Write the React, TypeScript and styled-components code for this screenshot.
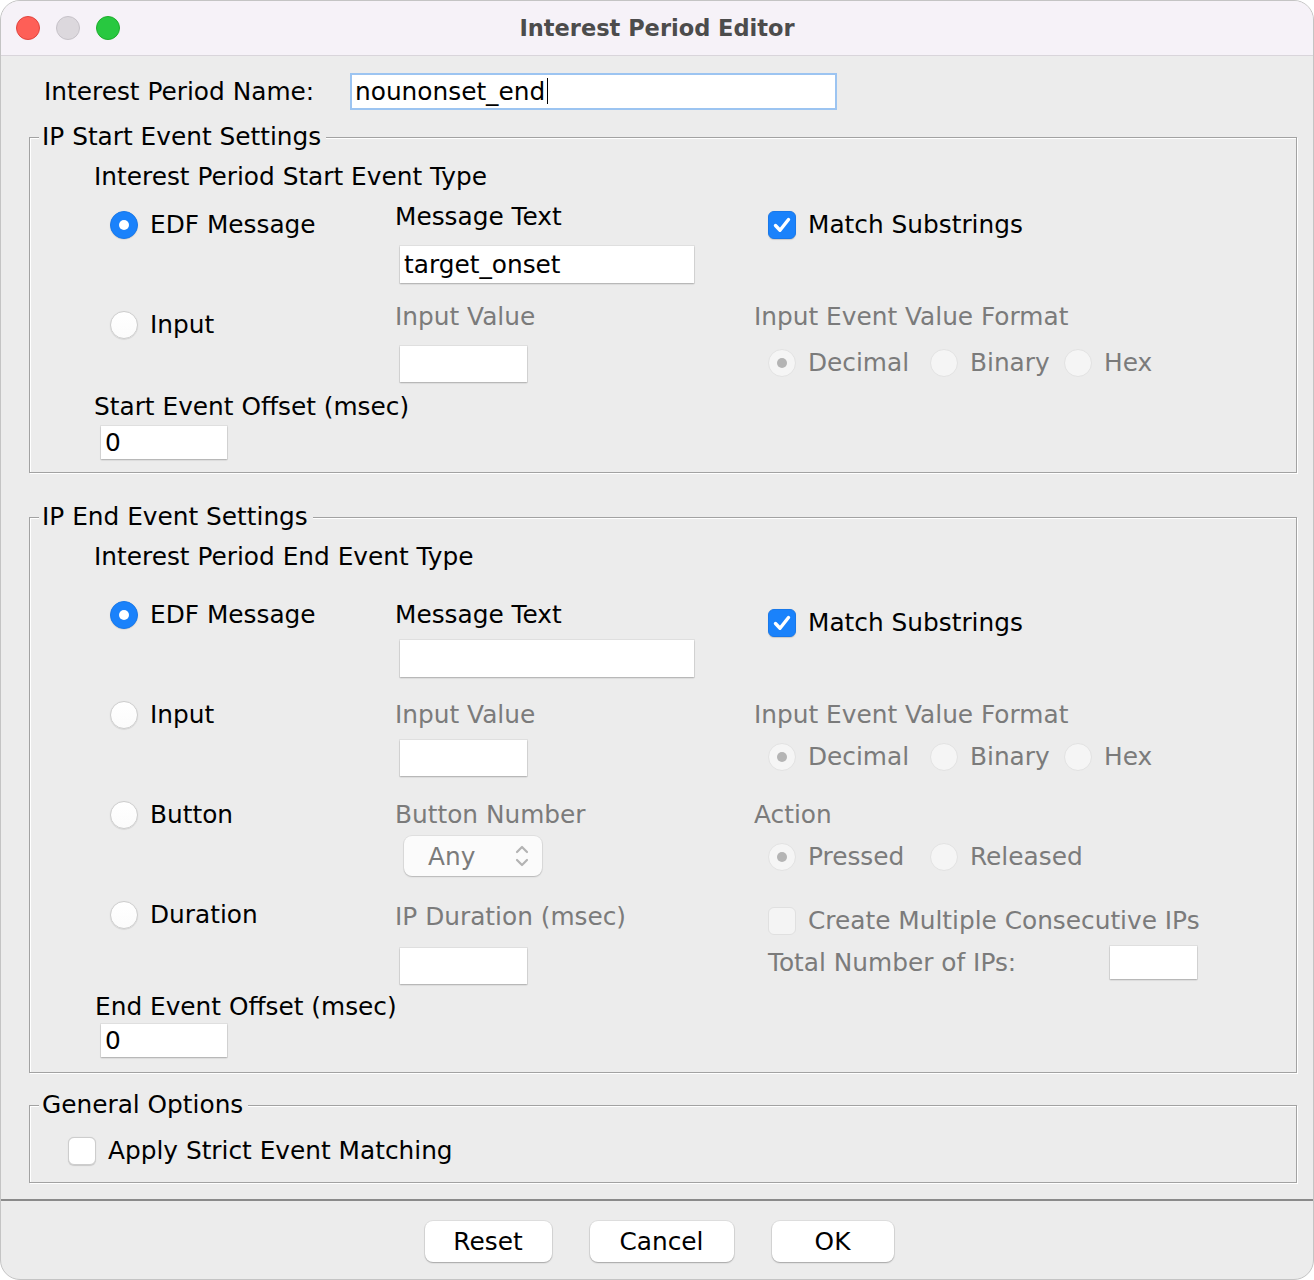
import React from "react";
import styled, { createGlobalStyle } from "styled-components";

const GlobalStyle = createGlobalStyle`
  html, body {
    margin: 0;
    padding: 0;
    background: #ffffff;
  }
`;

const Window = styled.div`
  width: 1314px;
  height: 1280px;
  box-sizing: border-box;
  border: 1px solid #c4c4c4;
  border-radius: 20px;
  overflow: hidden;
  background: #ececec;
  display: flex;
  flex-direction: column;
  font-family: "DejaVu Sans", "Liberation Sans", sans-serif;
  font-size: 24.8px;
  color: #000000;
`;

const TitleBar = styled.div`
  flex: none;
  height: 55px;
  box-sizing: border-box;
  border-bottom: 1px solid #d9d5db;
  background: #f6f2f8;
  display: grid;
  grid-template-columns: 1fr auto 1fr;
  align-items: center;
`;

const Lights = styled.div`
  display: flex;
  gap: 16px;
  padding-left: 15px;
`;

const Light = styled.span<{ $fill: string; $edge: string }>`
  width: 24px;
  height: 24px;
  box-sizing: border-box;
  border-radius: 50%;
  background: ${(p) => p.$fill};
  border: 1px solid ${(p) => p.$edge};
`;

const Title = styled.div`
  font-weight: bold;
  font-size: 22.5px;
  color: #4c4c4c;
`;

const Body = styled.div`
  flex: none;
  display: flex;
  flex-direction: column;
  padding: 17px 16px 16px 28px;
`;

const NameRow = styled.div`
  display: grid;
  grid-template-columns: 306px 487px;
  align-items: center;
  padding-left: 15px;
  height: 37px;
`;

const Text = styled.span<{ $muted?: boolean }>`
  line-height: 30px;
  white-space: nowrap;
  color: ${(p) => (p.$muted ? "#7b7b7b" : "#000000")};
`;

const Field = styled.div<{ $w: number; $h: number; $ml?: number; $mt?: number; $focus?: boolean }>`
  width: ${(p) => p.$w}px;
  height: ${(p) => p.$h}px;
  margin-left: ${(p) => p.$ml ?? 0}px;
  margin-top: ${(p) => p.$mt ?? 0}px;
  box-sizing: border-box;
  background: #ffffff;
  display: flex;
  align-items: center;
  padding-left: ${(p) => (p.$focus ? 3 : 4)}px;
  border: ${(p) => (p.$focus ? "2px solid #9cc4f1" : "none")};
  box-shadow: ${(p) =>
    p.$focus
      ? "none"
      : "0 0 0 1px rgba(0, 0, 0, 0.05), 0 1px 1.5px rgba(0, 0, 0, 0.24)"};
  white-space: nowrap;
`;

const Caret = styled.span`
  display: inline-block;
  width: 1px;
  height: 26px;
  margin: 0 0 2px 2px;
  background: #000000;
`;

const GroupBox = styled.div<{ $mt: number; $pb: number }>`
  margin-top: ${(p) => p.$mt}px;
  border: 1px solid #a2a2a2;
  box-shadow: inset 1px 1px 0 #ffffff, 1px 1px 0 #ffffff;
  display: flex;
  flex-direction: column;
  align-items: flex-start;
  padding-bottom: ${(p) => p.$pb}px;
`;

const GroupTitle = styled.div`
  margin: -16px 0 0 9px;
  padding: 0 5px 0 3px;
  background: #ececec;
  line-height: 30px;
  white-space: nowrap;
`;

const Indented = styled.div<{ $ml: number; $mt?: number }>`
  margin-left: ${(p) => p.$ml}px;
  margin-top: ${(p) => p.$mt ?? 0}px;
  display: flex;
  flex-direction: column;
  align-items: flex-start;
`;

const EventRow = styled.div<{ $h: number; $mt?: number }>`
  align-self: stretch;
  height: ${(p) => p.$h}px;
  margin-top: ${(p) => p.$mt ?? 0}px;
  padding-left: 80px;
  display: grid;
  grid-template-columns: 285px 359px 1fr;
  align-items: start;
`;

const Column = styled.div`
  display: flex;
  flex-direction: column;
  align-items: flex-start;
`;

const OptionLine = styled.div<{ $mt?: number; $ml?: number }>`
  display: flex;
  align-items: center;
  gap: 12px;
  height: 30px;
  margin-top: ${(p) => p.$mt ?? 0}px;
  margin-left: ${(p) => p.$ml ?? 0}px;
`;

const RadioDot = styled.span<{ $checked?: boolean; $disabled?: boolean }>`
  flex: none;
  width: 28px;
  height: 28px;
  box-sizing: border-box;
  border-radius: 50%;
  display: flex;
  align-items: center;
  justify-content: center;
  background: ${(p) =>
    p.$checked && !p.$disabled
      ? "#1a82fb"
      : p.$disabled
      ? "#f5f5f5"
      : "linear-gradient(#ffffff, #fbfbfb)"};
  border: 1px solid
    ${(p) => (p.$checked && !p.$disabled ? "#1878ea" : p.$disabled ? "#e2e2e2" : "#cdcdcd")};
  box-shadow: ${(p) => (p.$disabled ? "none" : "0 0.5px 1px rgba(0, 0, 0, 0.15)")};

  &::after {
    content: "";
    display: ${(p) => (p.$checked ? "block" : "none")};
    width: 10px;
    height: 10px;
    border-radius: 50%;
    background: ${(p) => (p.$disabled ? "#b4b4b4" : "#ffffff")};
  }
`;

const CheckBox = styled.span<{ $checked?: boolean; $disabled?: boolean }>`
  flex: none;
  width: 28px;
  height: 28px;
  box-sizing: border-box;
  border-radius: 6px;
  display: flex;
  align-items: center;
  justify-content: center;
  background: ${(p) => (p.$checked ? "#1a82fb" : p.$disabled ? "#f4f4f4" : "#ffffff")};
  border: 1px solid ${(p) => (p.$checked ? "#1878ea" : p.$disabled ? "#e0e0e0" : "#cdcdcd")};
  box-shadow: ${(p) => (p.$disabled ? "none" : "0 0.5px 1px rgba(0, 0, 0, 0.15)")};
`;

const RadioGroup = styled.div<{ $mt: number }>`
  display: grid;
  grid-template-columns: 162px 134px auto;
  margin-left: 14px;
  margin-top: ${(p) => p.$mt}px;
`;

const Select = styled.div`
  margin: 6px 0 0 9px;
  width: 138px;
  height: 40px;
  box-sizing: border-box;
  border-radius: 8px;
  background: #fbfbfb;
  box-shadow: 0 0 0 1px rgba(0, 0, 0, 0.05), 0 1px 1.5px rgba(0, 0, 0, 0.18);
  display: flex;
  align-items: center;
  justify-content: space-between;
  padding: 0 12px 0 24px;
  color: #7b7b7b;
`;

const TotalRow = styled.div`
  display: grid;
  grid-template-columns: 342px 87px;
  align-items: center;
  margin: 10px 0 0 14px;
`;

const Footer = styled.div`
  flex: 1;
  border-top: 2px solid #8a8a8a;
  display: flex;
  justify-content: center;
  align-items: flex-start;
  gap: 38px;
  padding: 20px 0 0 4px;
`;

const Button = styled.button<{ $w: number }>`
  width: ${(p) => p.$w}px;
  height: 41px;
  border: none;
  border-radius: 8px;
  background: #ffffff;
  box-shadow: 0 0 0 1px rgba(0, 0, 0, 0.06), 0 1px 1.5px rgba(0, 0, 0, 0.26);
  font-family: inherit;
  font-size: inherit;
  color: #000000;
  padding: 0;
`;

const Check = () => (
  <svg width="22" height="22" viewBox="0 0 22 22">
    <path
      d="M4.5 11.5 L9 16.2 L17.5 5.5"
      fill="none"
      stroke="#ffffff"
      strokeWidth="3.4"
      strokeLinecap="round"
      strokeLinejoin="round"
    />
  </svg>
);

const Chevrons = () => (
  <svg width="16" height="28" viewBox="0 0 16 28">
    <path
      d="M3 10 L8 5 L13 10 M3 18 L8 23 L13 18"
      fill="none"
      stroke="#b3b3b3"
      strokeWidth="2.2"
      strokeLinecap="round"
      strokeLinejoin="round"
    />
  </svg>
);

interface RadioProps {
  label: string;
  checked?: boolean;
  disabled?: boolean;
}

const Radio: React.FC<RadioProps & { mt?: number; ml?: number }> = ({
  label,
  checked,
  disabled,
  mt,
  ml,
}) => (
  <OptionLine $mt={mt} $ml={ml}>
    <RadioDot $checked={checked} $disabled={disabled} />
    <Text $muted={disabled}>{label}</Text>
  </OptionLine>
);

const Tick: React.FC<RadioProps & { mt?: number; ml?: number }> = ({
  label,
  checked,
  disabled,
  mt,
  ml,
}) => (
  <OptionLine $mt={mt} $ml={ml}>
    <CheckBox $checked={checked} $disabled={disabled}>
      {checked && <Check />}
    </CheckBox>
    <Text $muted={disabled}>{label}</Text>
  </OptionLine>
);

const FormatRadios: React.FC<{ mt: number; labels: string[] }> = ({ mt, labels }) => (
  <RadioGroup $mt={mt}>
    {labels.map((label, i) => (
      <Radio key={label} label={label} checked={i === 0} disabled />
    ))}
  </RadioGroup>
);

export default function App() {
  return (
    <>
      <GlobalStyle />
      <Window>
        <TitleBar>
          <Lights>
            <Light $fill="#fe5f57" $edge="#e0443e" />
            <Light $fill="#dcd8dd" $edge="#c6c2c8" />
            <Light $fill="#28c840" $edge="#1dad2b" />
          </Lights>
          <Title>Interest Period Editor</Title>
          <div />
        </TitleBar>

        <Body>
          <NameRow>
            <Text>Interest Period Name:</Text>
            <Field $w={487} $h={37} $focus>
              nounonset_end
              <Caret />
            </Field>
          </NameRow>

          <GroupBox $mt={27} $pb={13}>
            <GroupTitle>IP Start Event Settings</GroupTitle>
            <Indented $ml={64} $mt={10}>
              <Text>Interest Period Start Event Type</Text>
            </Indented>
            <EventRow $h={100} $mt={10}>
              <Column>
                <Radio label="EDF Message" checked mt={8} />
              </Column>
              <Column>
                <Text>Message Text</Text>
                <Field $w={294} $h={37} $ml={5} $mt={14}>
                  target_onset
                </Field>
              </Column>
              <Column>
                <Tick label="Match Substrings" checked mt={8} ml={14} />
              </Column>
            </EventRow>
            <EventRow $h={90}>
              <Column>
                <Radio label="Input" mt={8} />
              </Column>
              <Column>
                <Text $muted>Input Value</Text>
                <Field $w={127} $h={36} $ml={5} $mt={14} />
              </Column>
              <Column>
                <Text $muted>Input Event Value Format</Text>
                <FormatRadios mt={16} labels={["Decimal", "Binary", "Hex"]} />
              </Column>
            </EventRow>
            <Indented $ml={64}>
              <Text>Start Event Offset (msec)</Text>
              <Field $w={126} $h={33} $ml={7} $mt={4}>
                0
              </Field>
            </Indented>
          </GroupBox>

          <GroupBox $mt={44} $pb={15}>
            <GroupTitle>IP End Event Settings</GroupTitle>
            <Indented $ml={64} $mt={10}>
              <Text>Interest Period End Event Type</Text>
            </Indented>
            <EventRow $h={100} $mt={28}>
              <Column>
                <Radio label="EDF Message" checked />
              </Column>
              <Column>
                <Text>Message Text</Text>
                <Field $w={294} $h={37} $ml={5} $mt={10} />
              </Column>
              <Column>
                <Tick label="Match Substrings" checked mt={8} ml={14} />
              </Column>
            </EventRow>
            <EventRow $h={100}>
              <Column>
                <Radio label="Input" />
              </Column>
              <Column>
                <Text $muted>Input Value</Text>
                <Field $w={127} $h={36} $ml={5} $mt={10} />
              </Column>
              <Column>
                <Text $muted>Input Event Value Format</Text>
                <FormatRadios mt={12} labels={["Decimal", "Binary", "Hex"]} />
              </Column>
            </EventRow>
            <EventRow $h={100}>
              <Column>
                <Radio label="Button" />
              </Column>
              <Column>
                <Text $muted>Button Number</Text>
                <Select>
                  <span>Any</span>
                  <Chevrons />
                </Select>
              </Column>
              <Column>
                <Text $muted>Action</Text>
                <FormatRadios mt={12} labels={["Pressed", "Released"]} />
              </Column>
            </EventRow>
            <EventRow $h={92}>
              <Column>
                <Radio label="Duration" />
              </Column>
              <Column>
                <Text $muted style={{ marginTop: 2 }}>
                  IP Duration (msec)
                </Text>
                <Field $w={127} $h={36} $ml={5} $mt={16} />
              </Column>
              <Column>
                <Tick label="Create Multiple Consecutive IPs" disabled mt={6} ml={14} />
                <TotalRow>
                  <Text $muted>Total Number of IPs:</Text>
                  <Field $w={87} $h={33} />
                </TotalRow>
              </Column>
            </EventRow>
            <Indented $ml={65}>
              <Text>End Event Offset (msec)</Text>
              <Field $w={126} $h={33} $ml={6} $mt={2}>
                0
              </Field>
            </Indented>
          </GroupBox>

          <GroupBox $mt={32} $pb={16}>
            <GroupTitle>General Options</GroupTitle>
            <Tick label="Apply Strict Event Matching" mt={16} ml={38} />
          </GroupBox>
        </Body>

        <Footer>
          <Button $w={127}>Reset</Button>
          <Button $w={144}>Cancel</Button>
          <Button $w={122}>OK</Button>
        </Footer>
      </Window>
    </>
  );
}
